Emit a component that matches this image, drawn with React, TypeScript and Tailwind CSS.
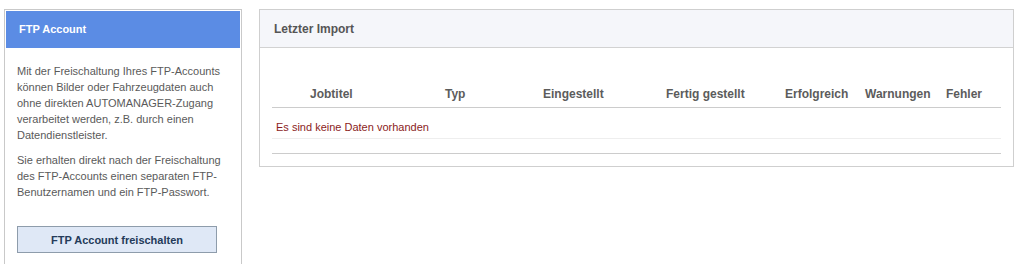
import React from "react";

const columns = [
  "Jobtitel",
  "Typ",
  "Eingestellt",
  "Fertig gestellt",
  "Erfolgreich",
  "Warnungen",
  "Fehler",
];

const FtpPanel = () => (
  <div className="w-[238px] shrink-0 border border-[#c9c9c9] bg-white">
    <div className="border border-white">
      <div className="flex h-[37px] items-center bg-[#5b8ce4] px-[13px] text-[11px] font-bold text-white">
        FTP Account
      </div>
    </div>
    <div className="px-3 pt-[14px] pb-3 text-[11px] leading-[16px] text-[#5a5a5a]">
      <p>
        Mit der Freischaltung Ihres FTP-Accounts können Bilder oder
        Fahrzeugdaten auch ohne direkten AUTOMANAGER-Zugang verarbeitet
        werden, z.B. durch einen Datendienstleister.
      </p>
      <p className="mt-[9px]">
        Sie erhalten direkt nach der Freischaltung des FTP-Accounts einen
        separaten FTP-Benutzernamen und ein FTP-Passwort.
      </p>
      <button className="mt-[26px] h-[27px] w-[200px] border border-[#8e9cab] bg-[#dfe8f6] text-[11px] font-bold text-[#243b5a]">
        FTP Account freischalten
      </button>
    </div>
  </div>
);

const ImportPanel = () => (
  <div className="w-[755px] shrink-0 border border-[#cfcfcf] bg-white">
    <div className="flex h-[38px] items-center border-b border-[#d2d2d2] bg-[#f5f6fa] px-[14px] text-[12px] font-bold text-[#555]">
      Letzter Import
    </div>
    <div className="px-3 pt-[30px] pb-3">
      <div className="grid h-[30px] grid-cols-[173px_98px_123px_119px_80px_81px_54px] items-center border-b border-[#cccccc] pt-[2px] text-[12px] font-bold text-[#5c5c5c]">
        {columns.map((c, i) => (
          <div key={c} className={i === 0 ? "pl-[38px]" : ""}>
            {c}
          </div>
        ))}
      </div>
      <div className="h-[31px] border-b border-[#eeeeee] pt-[11px] pl-1 text-[11px] leading-[16px] text-[#8b1c1c]">
        Es sind keine Daten vorhanden
      </div>
      <div className="h-[15px] border-b border-[#cccccc]" />
    </div>
  </div>
);

export default function App() {
  return (
    <div className="flex h-[264px] items-start gap-[17px] overflow-hidden bg-white pt-[9px] pl-1 font-['Liberation_Sans',Arial,sans-serif]">
      <FtpPanel />
      <ImportPanel />
    </div>
  );
}
